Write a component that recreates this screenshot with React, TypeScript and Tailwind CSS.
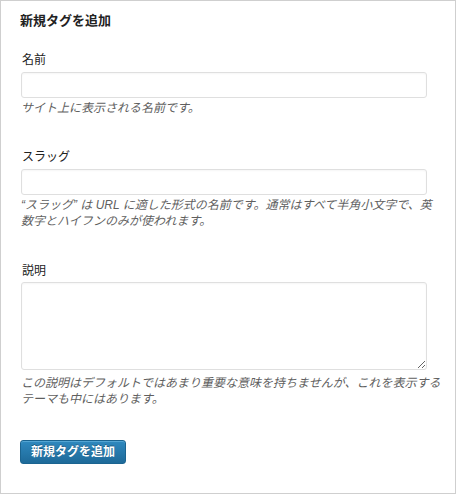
export default function App() {
  const fieldClass =
    "block w-[406px] rounded-[3px] border border-[#dfdfdf] bg-white shadow-[inset_0_1px_2px_rgba(0,0,0,0.04)] outline-none";
  const descClass = "italic text-[12px] leading-[16px] text-[#5f5f5f]";

  return (
    <div
      className="h-[494px] w-[456px] border border-[#cfcfcf] bg-white pl-[20px] pr-[13px] pt-[10px] text-[#222]"
      style={{ fontFamily: '"Liberation Sans", "Noto Sans CJK JP", sans-serif' }}
    >
      <h3 className="-ml-px text-[13px] font-bold leading-[20px]">新規タグを追加</h3>

      <form onSubmit={(e) => e.preventDefault()}>
        {/* name */}
        <div className="mt-[21px]">
          <label className="ml-px block text-[12px] leading-[16px]">名前</label>
          <input type="text" className={`${fieldClass} mt-[4px] h-[26px]`} />
          <p className={`${descClass} mt-[2px]`}>サイト上に表示される名前です。</p>
        </div>

        {/* slug */}
        <div className="mt-[33px]">
          <label className="ml-px block text-[12px] leading-[16px]">スラッグ</label>
          <input type="text" className={`${fieldClass} mt-[4px] h-[26px]`} />
          <p className={`${descClass} mt-[2px]`}>
            “スラッグ” は URL に適した形式の名前です。通常はすべて半角小文字で、英数字とハイフンのみが使われます。
          </p>
        </div>

        {/* description */}
        <div className="mt-[34px]">
          <label className="ml-px block text-[12px] leading-[16px]">説明</label>
          <textarea className={`${fieldClass} mt-[3px] h-[88px]`} />
          <p className={`${descClass} mt-[5px]`}>
            この説明はデフォルトではあまり重要な意味を持ちませんが、これを表示するテーマも中にはあります。
          </p>
        </div>

        <div className="mt-[32px]">
          <button
            type="submit"
            className="-ml-px h-[24px] rounded-[3px] border border-[#1b6490] bg-gradient-to-b from-[#2f89bf] to-[#1e6a99] px-[10px] text-[12px] font-bold leading-[22px] text-white shadow-[inset_0_1px_0_rgba(120,194,231,0.5)] [text-shadow:0_-1px_0_rgba(0,0,0,0.3)]"
          >
            新規タグを追加
          </button>
        </div>
      </form>
    </div>
  );
}
